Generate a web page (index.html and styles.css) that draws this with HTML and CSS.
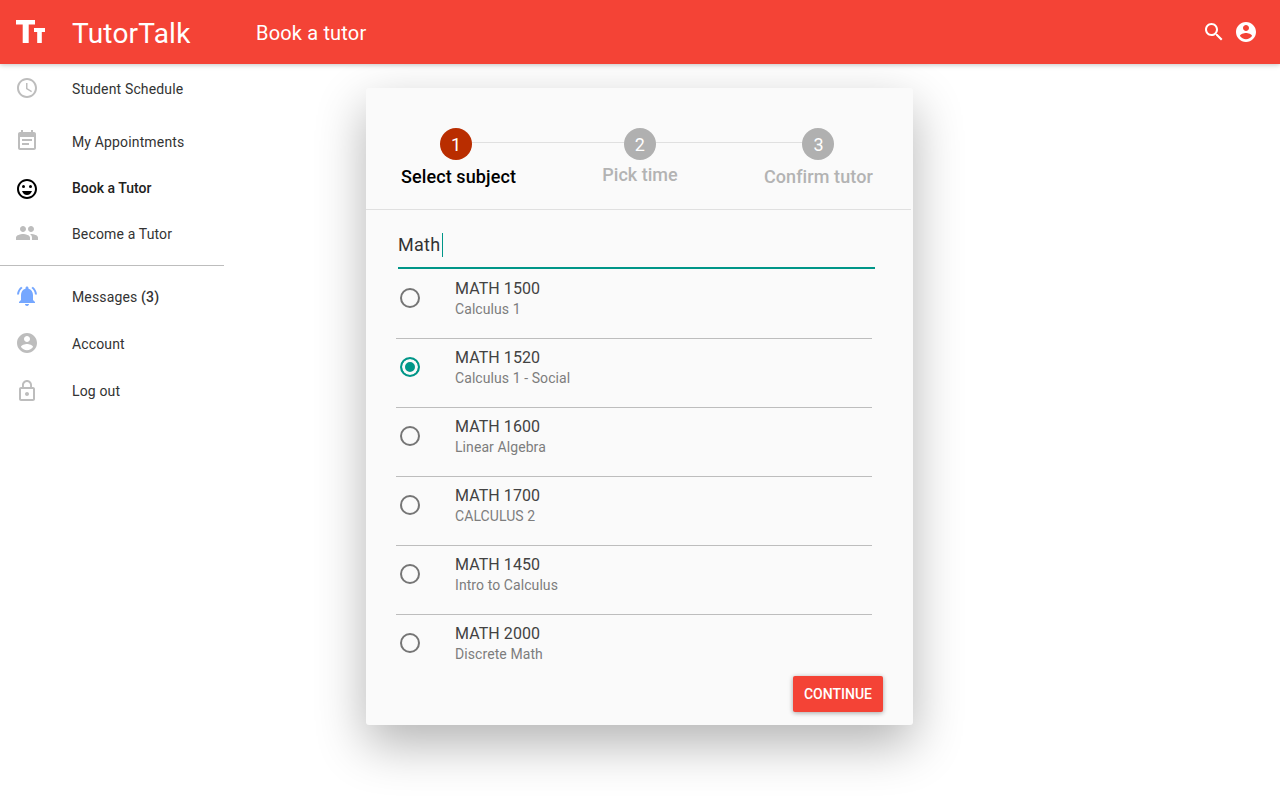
FILE: index.html
```html
<!DOCTYPE html>
<html lang="en">
<head>
<meta charset="utf-8">
<title>TutorTalk</title>
<link rel="stylesheet" href="styles.css">
</head>
<body>
<header class="appbar">
  <svg class="logo" viewBox="0 0 30 23" width="30" height="23"><path d="M0 0h19v4.500h-6.300v18.500h-6V4.500H0z"/><path d="M18 8h11v4h-3.200v11h-4.600V12H18z"/></svg>
  <div class="brand">TutorTalk</div>
  <div class="page-title">Book a tutor</div>
  <div class="appbar-actions">
    <svg class="icon" viewBox="0 0 24 24"><path d="M15.500 14h-.79l-.28-.27C15.410 12.590 16 11.110 16 9.500 16 5.910 13.090 3 9.500 3S3 5.910 3 9.500 5.910 16 9.500 16c1.610 0 3.090-.59 4.230-1.570l.27.28v.79l5 4.990L20.490 19l-4.990-5zm-6 0C7.010 14 5 11.990 5 9.500S7.010 5 9.500 5 14 7.010 14 9.500 11.990 14 9.500 14z"/></svg>
    <svg class="icon" viewBox="0 0 24 24"><path d="M12 2C6.480 2 2 6.480 2 12s4.480 10 10 10 10-4.480 10-10S17.520 2 12 2zm0 3c1.660 0 3 1.340 3 3s-1.340 3-3 3-3-1.340-3-3 1.340-3 3-3zm0 14.200c-2.500 0-4.710-1.280-6-3.220.03-1.990 4-3.080 6-3.080 1.990 0 5.970 1.090 6 3.080-1.290 1.940-3.500 3.220-6 3.220z"/></svg>
  </div>
</header>

<nav class="sidebar">
  <div class="nav-group">
    <a class="nav-item nav-item-first">
      <svg class="icon nav-icon nudge-up" viewBox="0 0 24 24"><path d="M11.990 2C6.470 2 2 6.480 2 12s4.470 10 9.990 10C17.520 22 22 17.520 22 12S17.520 2 11.990 2zM12 20c-4.420 0-8-3.580-8-8s3.580-8 8-8 8 3.580 8 8-3.580 8-8 8zm.5-13H11v6l5.250 3.150.75-1.230-4.500-2.670z"/></svg>
      <span>Student Schedule</span>
    </a>
    <a class="nav-item">
      <svg class="icon nav-icon nudge-up" viewBox="0 0 24 24"><path d="M17 10H7v2h10v-2zm2-7h-1V1h-2v2H8V1H6v2H5c-1.110 0-1.990.9-1.990 2L3 19c0 1.100.89 2 2 2h14c1.100 0 2-.9 2-2V5c0-1.100-.9-2-2-2zm0 16H5V8h14v11zm-5-5H7v2h7v-2z"/></svg>
      <span>My Appointments</span>
    </a>
    <a class="nav-item nav-item-active">
      <svg class="icon nav-icon nudge-down" viewBox="0 0 24 24"><circle cx="15.500" cy="9.500" r="1.500"/><circle cx="8.500" cy="9.500" r="1.500"/><path d="M11.990 2C6.470 2 2 6.480 2 12s4.470 10 9.990 10C17.520 22 22 17.520 22 12S17.520 2 11.990 2zM12 20c-4.420 0-8-3.580-8-8s3.580-8 8-8 8 3.580 8 8-3.580 8-8 8zm0-2c2.280 0 4.220-1.660 5-4H7c.78 2.340 2.720 4 5 4z"/></svg>
      <span>Book a Tutor</span>
    </a>
    <a class="nav-item">
      <svg class="icon nav-icon nudge-up" viewBox="0 0 24 24"><path d="M16 11c1.660 0 2.990-1.340 2.990-3S17.660 5 16 5c-1.660 0-3 1.340-3 3s1.340 3 3 3zm-8 0c1.660 0 2.990-1.340 2.990-3S9.660 5 8 5C6.340 5 5 6.340 5 8s1.340 3 3 3zm0 2c-2.330 0-7 1.170-7 3.500V19h14v-2.500c0-2.330-4.670-3.500-7-3.500zm8 0c-.29 0-.62.02-.97.05 1.160.84 1.970 1.970 1.970 3.450V19h6v-2.500c0-2.330-4.670-3.500-7-3.500z"/></svg>
      <span>Become a Tutor</span>
    </a>
  </div>
  <hr class="nav-divider">
  <div class="nav-group-lower">
    <a class="nav-item nav-item-tall">
      <svg class="icon nav-icon nav-icon-alert nudge-up" viewBox="0 0 24 24"><path d="M7.580 4.080L6.150 2.650C3.750 4.480 2.170 7.300 2.030 10.500h2c.15-2.650 1.510-4.970 3.550-6.420zm12.390 6.420h2c-.15-3.200-1.730-6.020-4.120-7.850l-1.420 1.430c2.020 1.450 3.390 3.770 3.540 6.420zM18 11c0-3.070-1.640-5.640-4.500-6.320V4c0-.83-.67-1.500-1.500-1.500s-1.500.67-1.500 1.500v.68C7.630 5.360 6 7.920 6 11v5l-2 2v1h16v-1l-2-2v-5zm-6 11c.14 0 .27-.01.4-.04.65-.14 1.180-.58 1.440-1.180.1-.24.15-.5.15-.78h-4c.01 1.100.9 2 2.010 2z"/></svg>
      <span>Messages <b>(3)</b></span>
    </a>
    <a class="nav-item nav-item-tall">
      <svg class="icon nav-icon nudge-up" viewBox="0 0 24 24"><path d="M12 2C6.480 2 2 6.480 2 12s4.480 10 10 10 10-4.480 10-10S17.520 2 12 2zm0 3c1.660 0 3 1.340 3 3s-1.340 3-3 3-3-1.340-3-3 1.340-3 3-3zm0 14.200c-2.500 0-4.710-1.280-6-3.220.03-1.990 4-3.080 6-3.080 1.990 0 5.970 1.090 6 3.080-1.290 1.940-3.500 3.220-6 3.220z"/></svg>
      <span>Account</span>
    </a>
    <a class="nav-item nav-item-tall">
      <svg class="icon nav-icon" viewBox="0 0 24 24"><path d="M12 17c1.100 0 2-.9 2-2s-.9-2-2-2-2 .9-2 2 .9 2 2 2zm6-9h-1V6c0-2.760-2.240-5-5-5S7 3.240 7 6v2H6c-1.100 0-2 .9-2 2v10c0 1.100.9 2 2 2h12c1.100 0 2-.9 2-2V10c0-1.100-.9-2-2-2zM8.900 6c0-1.710 1.390-3.100 3.100-3.100s3.100 1.390 3.100 3.100v2H8.900V6zM18 20H6V10h12v10z"/></svg>
      <span>Log out</span>
    </a>
  </div>
</nav>

<section class="dialog">
  <div class="stepper">
    <div class="step step-current"><div class="step-num">1</div><div class="step-label">Select subject</div></div>
    <div class="step step-raised"><div class="step-num">2</div><div class="step-label">Pick time</div></div>
    <div class="step"><div class="step-num">3</div><div class="step-label">Confirm tutor</div></div>
  </div>
  <div class="search"><span class="search-text">Math</span></div>
  <ul class="options">
    <li class="option"><span class="radio"></span><div><div class="option-title">MATH 1500</div><div class="option-sub">Calculus 1</div></div></li>
    <li class="option option-selected"><span class="radio"></span><div><div class="option-title">MATH 1520</div><div class="option-sub">Calculus 1 - Social</div></div></li>
    <li class="option"><span class="radio"></span><div><div class="option-title">MATH 1600</div><div class="option-sub">Linear Algebra</div></div></li>
    <li class="option"><span class="radio"></span><div><div class="option-title">MATH 1700</div><div class="option-sub">CALCULUS 2</div></div></li>
    <li class="option"><span class="radio"></span><div><div class="option-title">MATH 1450</div><div class="option-sub">Intro to Calculus</div></div></li>
    <li class="option"><span class="radio"></span><div><div class="option-title">MATH 2000</div><div class="option-sub">Discrete Math</div></div></li>
  </ul>
  <div class="dialog-actions"><button class="btn">CONTINUE</button></div>
</section>
</body>
</html>
```
FILE: styles.css
```css
* { box-sizing: border-box; }
html, body { margin: 0; height: 100%; }
body {
  font-family: Roboto, "Liberation Sans", sans-serif;
  background: #fff;
  color: #212121;
  overflow: hidden;
  position: relative;
}
.icon { width: 24px; height: 24px; fill: currentColor; display: block; flex: none; }
.nudge-up { margin-top: -2px; }
.nudge-down { margin-top: 2px; }

.appbar {
  height: 64px;
  background: #f44336;
  color: #fff;
  display: flex;
  align-items: center;
  position: relative;
  z-index: 2;
  box-shadow: 0 1px 6px rgba(0,0,0,.12), 0 1px 4px rgba(0,0,0,.12);
}
.logo { fill: #fff; margin-left: 16px; flex: none; margin-top: -1px; }
.brand { font-size: 28px; margin-left: 26px; width: 184px; letter-spacing: .22px; padding-top: 2px; }
.page-title { font-size: 20px; letter-spacing: .17px; padding-top: 2px; }
.appbar-actions { margin-left: auto; margin-right: 22px; display: flex; gap: 8px; }

.sidebar { width: 224px; padding-top: 2px; }
.nav-item {
  display: flex;
  align-items: center;
  height: 46px;
  padding-left: 15px;
  font-size: 14px;
  color: #333;
  letter-spacing: .15px;
}
.nav-item-first { margin-bottom: 7px; }
.nav-item-tall { height: 47px; }
.nav-icon { color: #bdbdbd; margin-right: 33px; }
.nav-icon-alert { color: #75a7ff; }
.nav-item-active { font-weight: 500; font-size: 14px; color: #212121; letter-spacing: 0; }
.nav-item-active .nav-icon { color: #000; }
.nav-item b { font-weight: 500; }
.nav-divider { border: 0; height: 1px; background: #bdbdbd; margin: 8px 0 7px; }

.dialog {
  position: absolute;
  left: 366px;
  top: 88px;
  width: 547px;
  height: 637px;
  background: #fafafa;
  border-radius: 3px;
  box-shadow: 0 19px 50px rgba(0,0,0,.3);
  display: flex;
  flex-direction: column;
}
.stepper {
  position: relative;
  height: 122px;
  margin-right: 2px;
  padding: 40px 38px 0 35px;
  border-bottom: 1px solid #e0e0e0;
  display: flex;
  justify-content: space-between;
}
.stepper::before {
  content: "";
  position: absolute;
  left: 90px;
  width: 362px;
  top: 54px;
  height: 1px;
  background: #e0e0e0;
}
.step {
  position: relative;
  display: flex;
  flex-direction: column;
  align-items: center;
  color: #b3b3b3;
}
.step-num {
  width: 32px;
  height: 32px;
  border-radius: 50%;
  background: #b0b0b0;
  color: #fff;
  font-size: 18px;
  display: flex;
  align-items: center;
  justify-content: center;
}
.step-label { font-size: 18px; font-weight: 500; line-height: 24px; margin-top: 5px; white-space: nowrap; letter-spacing: .1px; }
.step-current { color: #000; }
.step-current .step-num { background: #b92d00; margin-right: 5px; }
.step-raised .step-label { margin-top: 3px; letter-spacing: 0; }

.search {
  margin: 0 38px 0 32px;
  height: 59px;
  border-bottom: 2px solid #009688;
  padding-top: 23px;
  font-size: 18px;
  line-height: 24px;
  color: #333;
}
.search-text { display: inline-block; height: 24px; border-right: 1px solid #009688; padding-right: 1px; letter-spacing: .3px; }

.options { list-style: none; margin: 1px 0 0 30px; padding: 0; width: 476px; flex: none; }
.option {
  height: 69px;
  display: flex;
  padding: 8px 0 0 4px;
  border-bottom: 1px solid #bdbdbd;
}
.option:last-child { border-bottom: 0; height: 60px; }
.radio {
  flex: none;
  width: 20px;
  height: 20px;
  margin-top: 10px;
  margin-right: 35px;
  border: 2px solid #757575;
  border-radius: 50%;
  background: transparent;
}
.option-selected .radio { border-color: #009688; background: #009688; box-shadow: inset 0 0 0 3px #fafafa; }
.option-title { font-size: 16px; line-height: 22px; color: #424242; letter-spacing: .08px; }
.option-sub { font-size: 14px; line-height: 20px; color: #7d7d7d; letter-spacing: .08px; margin-top: -1px; }

.dialog-actions { display: flex; justify-content: flex-end; padding: 0 30px; margin-top: auto; margin-bottom: 13px; }
.btn {
  width: 90px;
  height: 36px;
  border: 0;
  border-radius: 2px;
  background: #f44336;
  color: #fff;
  font: 500 14px Roboto, "Liberation Sans", sans-serif;
  box-shadow: 0 1px 6px rgba(0,0,0,.12), 0 1px 4px rgba(0,0,0,.24);
  padding: 0;
}
```
